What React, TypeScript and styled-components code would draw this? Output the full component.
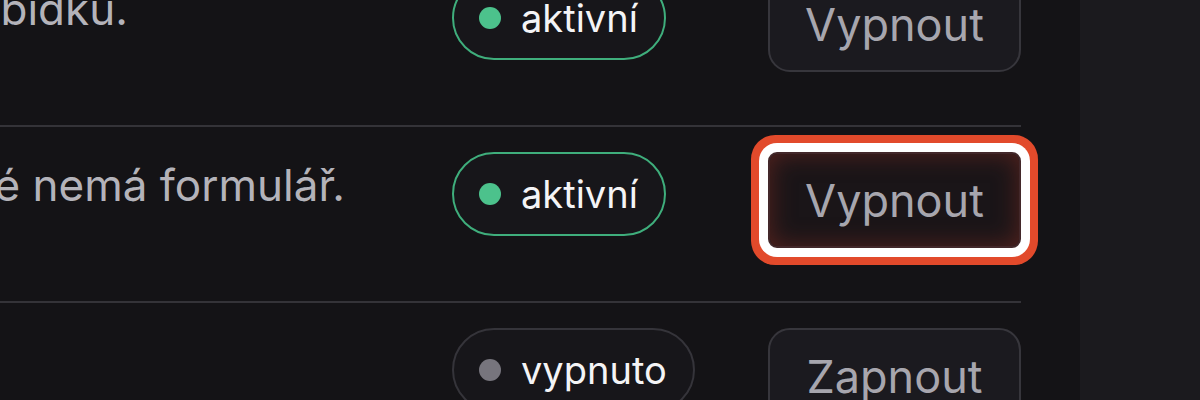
import styled, { createGlobalStyle, css } from "styled-components";

const GlobalStyle = createGlobalStyle`
  html, body {
    margin: 0;
    background: #141316;
  }
  body {
    font-family: Inter, "Noto Sans", sans-serif;
    -webkit-font-smoothing: antialiased;
  }
`;

const Page = styled.div`
  display: flex;
  height: 400px;
  overflow: hidden;
`;

const Main = styled.main`
  flex: 1;
  display: flex;
  justify-content: flex-end;
  align-items: flex-start;
  padding-right: 59px;
  overflow: hidden;
  background: #141316;
`;

const SidePanel = styled.aside`
  flex: none;
  width: 120px;
  background: #1b1a1e;
`;

const Table = styled.div`
  flex: none;
  width: 1759px;
  margin-top: -49px;
  display: flex;
  flex-direction: column;
`;

const Row = styled.div`
  display: grid;
  grid-template-columns: minmax(0, 1fr) 316px 253px;
  align-items: start;
  box-sizing: border-box;
  height: 176px;
  padding-top: 25px;
  border-bottom: 2px solid #343338;

  &:last-child {
    border-bottom: none;
  }
`;

const Description = styled.p`
  margin: 0 24px 0 0;
  overflow: hidden;
  font-size: 44px;
  line-height: 1.5;
  color: #b4b3ba;
  white-space: nowrap;
`;

const Badge = styled.span<{ $on: boolean }>`
  justify-self: start;
  display: inline-flex;
  align-items: center;
  gap: 20px;
  box-sizing: border-box;
  height: 84px;
  padding: 0 26px 0 25px;
  border: 2px solid ${(p) => (p.$on ? "#3fae7c" : "#35343a")};
  border-radius: 999px;
  background: #17161a;
  font-size: 38px;
  font-weight: 400;
  color: #f4f4f6;
`;

const Dot = styled.span<{ $on: boolean }>`
  width: 22px;
  height: 22px;
  border-radius: 50%;
  background: ${(p) => (p.$on ? "#4cc28c" : "#77757d")};
`;

const ActionButton = styled.button<{ $highlight?: boolean }>`
  box-sizing: border-box;
  width: 253px;
  height: 96px;
  border: 2px solid #37363c;
  border-radius: 22px;
  background: #1b1a1f;
  font-family: inherit;
  font-size: 45px;
  color: #a7a6ae;
  cursor: pointer;

  ${(p) =>
    p.$highlight &&
    css`
      border-radius: 9px;
      border-color: #43282a;
      background: #1a1518;
      box-shadow: inset 0 0 24px rgba(125, 44, 34, 0.6), 0 0 0 9px #ffffff,
        0 0 0 17px #e24a2b;
    `}
`;

type Item = {
  text: string;
  on: boolean;
  highlight?: boolean;
};

const items: Item[] = [
  { text: "Ukáže tlačítko, které otevře další nabídku.", on: true },
  { text: "Platí pro každou stránku webu, které nemá formulář.", on: true, highlight: true },
  { text: "Denní souhrn.", on: false },
];

export default function App() {
  return (
    <>
      <GlobalStyle />
      <Page>
        <Main>
          <Table>
            {items.map((item, i) => (
              <Row key={i}>
                <Description>{item.text}</Description>
                <Badge $on={item.on}>
                  <Dot $on={item.on} />
                  {item.on ? "aktivní" : "vypnuto"}
                </Badge>
                <ActionButton $highlight={item.highlight}>
                  {item.on ? "Vypnout" : "Zapnout"}
                </ActionButton>
              </Row>
            ))}
          </Table>
        </Main>
        <SidePanel />
      </Page>
    </>
  );
}
